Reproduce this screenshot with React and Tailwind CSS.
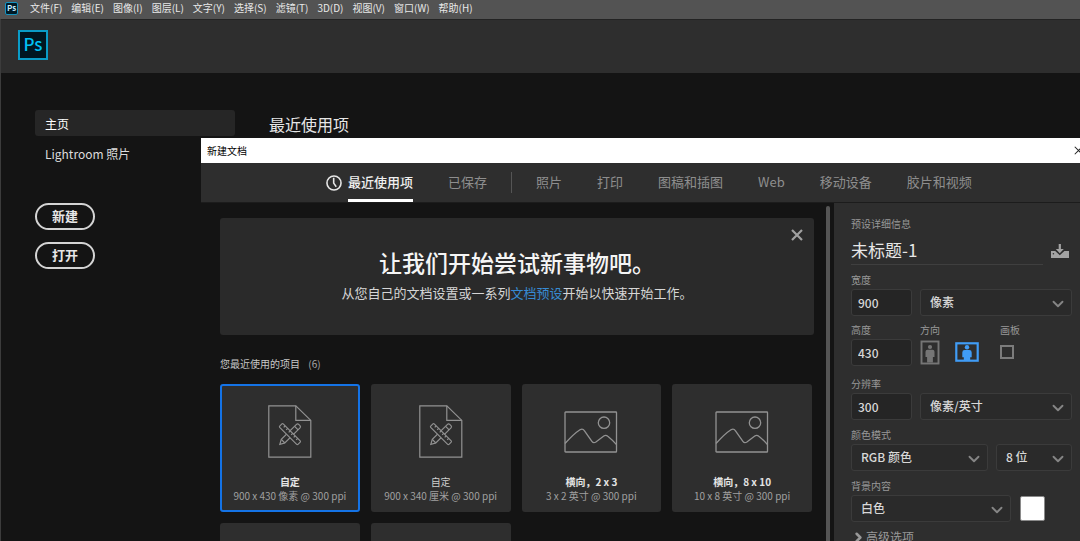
// src/pages/HomeScreen.jsx
import React, { useState } from 'react';
import { ChevronDown, ChevronRight } from 'lucide-react';

const menus = ['文件(F)', '编辑(E)', '图像(I)', '图层(L)', '文字(Y)', '选择(S)', '滤镜(T)', '3D(D)', '视图(V)', '窗口(W)', '帮助(H)'];

const tabs = ['照片', '打印', '图稿和插图', 'Web', '移动设备', '胶片和视频'];

const presets = [
    { id: 1, icon: 'doc', name: '自定', size: '900 x 430 像素 @ 300 ppi' },
    { id: 2, icon: 'doc', name: '自定', size: '900 x 340 厘米 @ 300 ppi' },
    { id: 3, icon: 'photo', name: '横向，2 x 3', size: '3 x 2 英寸 @ 300 ppi' },
    { id: 4, icon: 'photo', name: '横向，8 x 10', size: '10 x 8 英寸 @ 300 ppi' },
    { id: 5 },
    { id: 6 },
];

function ClockIcon() {
    return (
        <svg width="16" height="16" viewBox="0 0 15 15" fill="none" stroke="#e6e6e6" strokeWidth="1.5">
            <circle cx="7.5" cy="7.5" r="6.6" />
            <path d="M7.2 2.6v5l2.4 3.4" />
        </svg>
    );
}

function DocIcon() {
    return (
        <svg width="44" height="53" viewBox="0 0 44 53" fill="none" stroke="#929292" strokeWidth="1.2">
            <path d="M.8.8h27l15 14.6v36.8H.8z" />
            <path d="M27.8.8v14.6h15" />
            {/* pencil, then the ruler lying over it */}
            <path d="M11.8 39.4l1.5-5 15.2-15a1.6 1.6 0 0 1 2.2 0l1.3 1.3a1.6 1.6 0 0 1 0 2.2L16.8 38z" />
            <path d="M13.3 34.4l3.5 3.6M26.6 21.3l3.5 3.5" />
            <path d="M15.2 18.9l17 17a1 1 0 0 1 0 1.3l-2.2 2.2a1 1 0 0 1-1.3 0l-17-17a1 1 0 0 1 0-1.3l2.2-2.2a1 1 0 0 1 1.3 0z" fill="#2e2e2e" />
            <path d="M17.2 20.9l-1.5 1.5M19.7 23.4l-1.5 1.5M22.2 25.9l-1.5 1.5M24.7 28.4l-1.5 1.5M27.2 30.9l-1.5 1.5M29.7 33.4l-1.5 1.5" />
        </svg>
    );
}

function PhotoIcon() {
    return (
        <svg width="54" height="44" viewBox="0 -2 54 44" fill="none" stroke="#929292" strokeWidth="1.3">
            <rect x="1" y="1" width="51.5" height="40" rx=".6" />
            <circle cx="40" cy="11.7" r="5.7" />
            <path d="M1 32.500C6 27 11 22 16 18.800q2.700-1.700 4.500 1l7.400 10.600q1.600 2.200 4 .6l7.900-6q2-1.500 4 .2 4.500 3.600 8.700 8.400" />
        </svg>
    );
}

function SaveIcon() {
    return (
        <svg width="20" height="15" viewBox="0 0 20 15" fill="#a3a3a3">
            <path d="M8.700 0h2.200v5h2.900L9.800 9.200 5.800 5h2.900z" />
            <path d="M1 7h4.200l4.600 4.300L14.400 7H19v7H1z" />
            <circle cx="3.400" cy="9.800" r=".8" fill="#2e2e2e" />
        </svg>
    );
}

function PortraitIcon() {
    return (
        <svg width="20" height="25" viewBox="0 0 20 25" fill="#757575">
            <rect x="1.500" y="1.500" width="17" height="22" fill="none" stroke="#757575" strokeWidth="1.900" />
            <circle cx="10" cy="7" r="2.100" />
            <path d="M7.500 9.700h5q2 0 2 2v5.300h-1.600v5.500H7.100V17H5.500v-5.300q0-2 2-2z" />
        </svg>
    );
}

function LandscapeIcon() {
    return (
        <svg width="25" height="21" viewBox="0 0 25 21" fill="#409cf5">
            <rect x="1.300" y="1.300" width="21.400" height="17.400" fill="none" stroke="#409cf5" strokeWidth="2.200" />
            <circle cx="12" cy="5.300" r="2.200" />
            <path d="M9.700 8h4.600q2.400 0 2.400 2.400v4.800h-1.500v3.800H8.800v-3.800H7.300v-4.800Q7.300 8 9.700 8z" />
        </svg>
    );
}

function CrossIcon({ size, width, color }) {
    return (
        <svg width={size} height={size} viewBox="0 0 12 12" stroke={color} strokeWidth={width}>
            <path d="M1 1l10 10M11 1L1 11" />
        </svg>
    );
}

function PresetCard({ preset, selected, onSelect }) {
    return (
        <button
            onClick={() => onSelect(preset.id)}
            className={`flex h-32 flex-col items-center rounded-[3px] border-2 bg-[#2e2e2e] pt-[17px] ${selected ? 'border-[#1473e6]' : 'border-[#2e2e2e]'}`}
        >
            {preset.name && (
                <>
                    <span className="flex h-[56px] items-center">{preset.icon === 'doc' ? <DocIcon /> : <PhotoIcon />}</span>
                    <span className={`mt-4 text-[10px] leading-[14px] ${selected || preset.icon === 'photo' ? 'font-bold text-[#e4e4e4]' : 'text-[#d0d0d0]'}`}>{preset.name}</span>
                    <span className="text-[10px] leading-[14px] whitespace-nowrap text-[#a0a0a0]">{preset.size}</span>
                </>
            )}
        </button>
    );
}

function Field({ id, label, children, className = '' }) {
    return (
        <div className={className}>
            <label htmlFor={id} className="mb-px block text-[10px] leading-4 text-[#989898]">{label}</label>
            {children}
        </div>
    );
}

function NumberBox({ id, value }) {
    return (
        <input
            id={id}
            defaultValue={value}
            className="h-[27px] w-full rounded-[3px] border border-[#3b3b3b] bg-[#252525] px-[6px] text-[12px] font-medium text-[#d8d8d8]"
        />
    );
}

function SelectBox({ id, label, options }) {
    return (
        <div className="relative">
            <select
                id={id}
                aria-label={label}
                className="block h-[27px] w-full appearance-none rounded-[3px] border border-[#3b3b3b] bg-[#2a2a2a] pb-px pl-[9px] text-[12px] font-medium text-[#d8d8d8]"
            >
                {options.map((option) => <option key={option}>{option}</option>)}
            </select>
            <ChevronDown className="pointer-events-none absolute top-[6px] right-[5px] h-[18px] w-[18px] text-[#858585]" strokeWidth={2.5} />
        </div>
    );
}

function PresetDetails() {
    const [orientation, setOrientation] = useState('landscape');

    return (
        <form className="w-[246px] shrink-0 bg-[#2e2e2e] pt-[13px] pr-2 pl-[17px]">
            <h2 className="text-[10px] leading-4 text-[#989898]">预设详细信息</h2>
            <div className="flex h-[33px] items-center">
                <input
                    aria-label="文档名称"
                    defaultValue="未标题-1"
                    className="h-full min-w-0 flex-1 border-b border-[#3f3f3f] pt-[3px] text-[17px] text-[#e6e6e6]"
                />
                <button type="button" aria-label="存储预设" className="mr-[2px] ml-[7px] pt-[6px]"><SaveIcon /></button>
            </div>

            <div className="mt-[7px] flex items-end gap-2">
                <Field id="width" label="宽度" className="w-[61px]"><NumberBox id="width" value="900" /></Field>
                <div className="flex-1"><SelectBox id="unit" label="单位" options={['像素', '英寸', '厘米', '毫米']} /></div>
            </div>

            <div className="mt-[6px] flex gap-2">
                <Field id="height" label="高度" className="w-[61px]"><NumberBox id="height" value="430" /></Field>
                <Field id="portrait" label="方向" className="w-[72px]">
                    <div className="flex h-[26px] items-center gap-[15px]">
                        <button id="portrait" type="button" aria-label="纵向" aria-pressed={orientation === 'portrait'} onClick={() => setOrientation('portrait')}>
                            <PortraitIcon />
                        </button>
                        <button type="button" aria-label="横向" aria-pressed={orientation === 'landscape'} onClick={() => setOrientation('landscape')}>
                            <LandscapeIcon />
                        </button>
                    </div>
                </Field>
                <Field id="artboard" label="画板">
                    <div className="flex h-[26px] items-center">
                        <input id="artboard" type="checkbox" className="h-[14px] w-[14px] appearance-none border-2 border-[#7c7c7c] checked:bg-[#409cf5]" />
                    </div>
                </Field>
            </div>

            <div className="mt-[10px] flex items-end gap-2">
                <Field id="resolution" label="分辨率" className="w-[61px]"><NumberBox id="resolution" value="300" /></Field>
                <div className="flex-1"><SelectBox id="resolution-unit" label="分辨率单位" options={['像素/英寸', '像素/厘米']} /></div>
            </div>

            <div className="mt-[7px] flex items-end gap-2">
                <Field id="mode" label="颜色模式" className="flex-1"><SelectBox id="mode" options={['RGB 颜色', 'CMYK 颜色', '灰度']} /></Field>
                <div className="w-[76px]"><SelectBox id="depth" label="位深度" options={['8 位', '16 位', '32 位']} /></div>
            </div>

            <div className="mt-[7px] flex items-end gap-[9px]">
                <Field id="background" label="背景内容" className="w-[160px]"><SelectBox id="background" options={['白色', '黑色', '透明']} /></Field>
                <button type="button" aria-label="背景颜色" className="mb-px h-[25px] w-[25px] rounded-[2px] border border-[#8a8a8a] bg-white"></button>
            </div>

            <button type="button" className="mt-[6px] flex items-center text-[12px] leading-4 text-[#989898]">
                <ChevronRight className="mt-[2px] h-[15px] w-[15px]" strokeWidth={4} />
                高级选项
            </button>
        </form>
    );
}

function NewDocumentDialog() {
    const [selected, setSelected] = useState(1);

    return (
        <div role="dialog" aria-label="新建文档" className="absolute top-[138px] right-0 bottom-0 left-[201px] flex flex-col overflow-hidden bg-[#141414]">
            <div className="flex h-[25px] shrink-0 items-center justify-between bg-white pb-px pl-[6px] text-[10px] text-black">
                新建文档
                <button aria-label="关闭" className="-mr-[3px]"><CrossIcon size={9} width={1.4} color="#222222" /></button>
            </div>

            {/* Tabs */}
            <div className="flex h-10 shrink-0 gap-[35px] border-b border-[#1c1c1c] bg-[#2e2e2e] pl-[125px] text-[13px] whitespace-nowrap text-[#8e8e8e]">
                <button className="flex items-center gap-[6px] font-medium text-[#f0f0f0]">
                    <ClockIcon />
                    <span className="flex h-full items-center border-b-3 border-white pt-px">最近使用项</span>
                </button>
                <button className="pb-[2px]">已保存</button>
                <span className="-mx-[11px] h-[21px] w-px self-center bg-[#555555]"></span>
                {tabs.map((tab) => <button key={tab} className="pb-[2px]">{tab}</button>)}
            </div>

            <div className="flex min-h-0 flex-1">
                <div className="min-w-0 flex-1 overflow-hidden pt-[15px] pr-3 pl-[19px]">
                    <section className="relative rounded-[3px] bg-[#2a2a2a] pt-[28px] pb-[32px] text-center">
                        <h1 className="text-[23px] leading-8 font-medium text-[#f5f5f5]">让我们开始尝试新事物吧。</h1>
                        <p className="mt-[5px] text-[13px] leading-5 text-[#d6d6d6]">
                            从您自己的文档设置或一系列<a href="#presets" className="text-[#378ad3]">文档预设</a>开始以快速开始工作。
                        </p>
                        <button aria-label="关闭提示" className="absolute top-[11px] right-[11px]"><CrossIcon size={12} width={2.2} color="#a0a0a0" /></button>
                    </section>

                    <h2 className="mt-[21px] text-[10px] leading-4 text-[#c8c8c8]">
                        您最近使用的项目 <span className="ml-[6px] text-[#a8a8a8]">(6)</span>
                    </h2>
                    <div id="presets" className="mt-3 grid grid-cols-4 gap-[11px] pr-[2px]">
                        {presets.map((preset) => (
                            <PresetCard key={preset.id} preset={preset} selected={preset.id === selected} onSelect={setSelected} />
                        ))}
                    </div>
                </div>
                {/* Scrollbar */}
                <div className="mt-[3px] mr-1 w-1 shrink-0 rounded-t-full bg-[#555555]"></div>
                <PresetDetails />
            </div>
        </div>
    );
}

export default function App() {
    return (
        <div className="relative flex h-screen flex-col overflow-hidden bg-[#141414] font-['Noto_Sans_CJK_SC',sans-serif] text-[#e6e6e6]">
            <nav className="flex h-[19px] shrink-0 items-center gap-[9px] bg-[#535353] pb-[3px] pl-[5px] text-[10px] leading-4 whitespace-nowrap text-[#e8e8e8]">
                <span className="mr-[3px] flex h-[13px] w-[13px] items-center justify-center rounded-[2px] border border-[#1593c0] bg-[#001a26] text-[8px] leading-none font-bold text-[#c4ecfb]">Ps</span>
                {menus.map((menu) => <button key={menu}>{menu}</button>)}
            </nav>

            <div className="flex flex-1 flex-col border-l border-[#3c3c3c]">
                <header className="flex h-[54px] shrink-0 items-start border-t border-[#232323] bg-[#2e2e2e] pt-[10px] pl-[17px]">
                    <div className="flex h-[30px] w-[30px] items-center justify-center border-2 border-[#0a9cc8] bg-[#001621] pb-[3px] text-[17px] leading-none font-medium text-[#00c1f5]">Ps</div>
                </header>

                <div className="flex gap-[34px] pt-[37px] pl-[34px]">
                    <aside className="w-[200px] shrink-0">
                        <a href="#home" className="block rounded-[3px] bg-[#262626] px-[10px] pt-1 pb-[2px] text-[12px] leading-5 text-white">主页</a>
                        <a href="#lightroom" className="mt-1 block px-[10px] pt-1 pb-[2px] text-[12px] leading-5 text-[#dcdcdc]">Lightroom 照片</a>
                        <div className="mt-[37px] flex flex-col items-start gap-3">
                            <button className="h-[27px] w-[60px] rounded-full border-2 border-[#d4d4d4] pb-[2px] text-[13px] leading-none font-bold">新建</button>
                            <button className="h-[27px] w-[60px] rounded-full border-2 border-[#d4d4d4] pb-[2px] text-[13px] leading-none font-bold">打开</button>
                        </div>
                    </aside>
                    <h1 className="pt-[2px] text-[16px] leading-6">最近使用项</h1>
                </div>
            </div>

            <NewDocumentDialog />
        </div>
    );
}
